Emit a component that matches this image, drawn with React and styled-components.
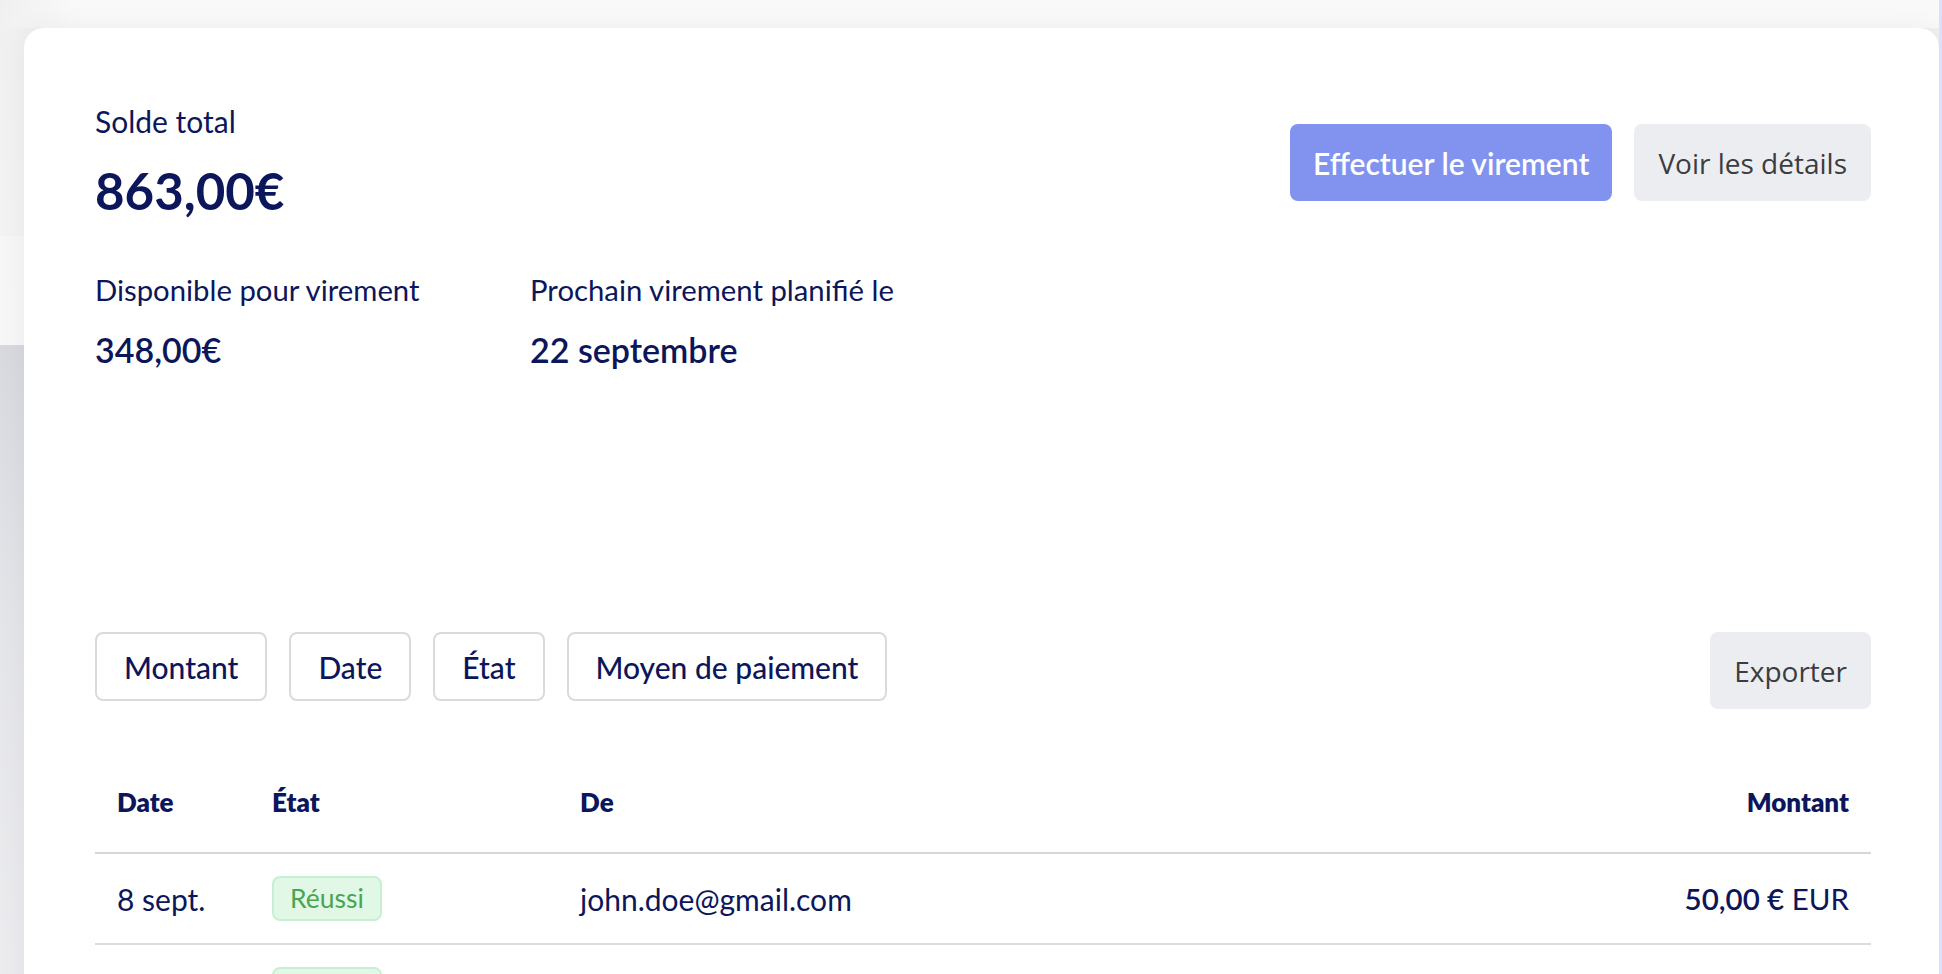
import React from 'react';
import styled, { createGlobalStyle } from 'styled-components';

const navy = '#0c165a';

const GlobalStyle = createGlobalStyle`
  html, body {
    margin: 0;
    padding: 0;
    height: 100%;
    overflow: hidden;
  }
  body {
    font-family: Lato, "Noto Sans", sans-serif;
    background: #f7f7f8;
    color: ${navy};
  }
  #root {
    height: 100%;
  }
`;

const Page = styled.div`
  display: flex;
  height: 100vh;
`;

const Stage = styled.div`
  flex: 1;
  display: flex;
  flex-direction: column;
  padding: 28px 0 0 24px;
  background:
    linear-gradient(to right, rgba(249, 249, 249, 0) 0, #f9f9f9 80px) 0 0 / 100% 28px no-repeat,
    linear-gradient(
      to bottom,
      #f0f0f1 0,
      #f3f3f4 236px,
      #f6f6f7 236px,
      #f7f7f8 345px,
      #d8d9df 345px,
      #e4e5e9 620px,
      #ececef 974px
    );
`;

const Strip = styled.div`
  width: 3px;
  flex-shrink: 0;
  background: #dae2fb;
`;

const Card = styled.div`
  flex: 1;
  background: #ffffff;
  border-radius: 20px 20px 0 0;
  padding: 75px 68px 0 71px;
  box-shadow: 0 0 28px rgba(30, 30, 50, 0.05);
`;

const Top = styled.div`
  display: flex;
  justify-content: space-between;
  align-items: flex-start;
`;

const Summary = styled.div`
  display: flex;
  flex-direction: column;
`;

const Label = styled.div`
  font-size: ${(p) => p.$size || 30}px;
  line-height: 36px;
  font-weight: 400;
  white-space: nowrap;
`;

const Balance = styled.div`
  margin-top: 22px;
  font-size: 51px;
  line-height: 60px;
  font-weight: 700;
`;

const Stats = styled.div`
  display: grid;
  grid-template-columns: 435px auto;
  margin-top: 51px;
`;

const Stat = styled.div`
  display: flex;
  flex-direction: column;
  gap: 22px;
`;

const StatValue = styled.div`
  font-size: 34px;
  line-height: 40px;
  font-weight: 600;
`;

const Actions = styled.div`
  display: flex;
  gap: 22px;
  margin-top: 21px;
`;

const Button = styled.button`
  height: 77px;
  border: none;
  border-radius: 8px;
  padding: 0 ${(p) => (p.$primary ? 23 : 24)}px;
  background: ${(p) => (p.$primary ? '#8193ee' : '#ecedf0')};
  color: ${(p) => (p.$primary ? '#ffffff' : '#3b3c41')};
  font-family: ${(p) => (p.$primary ? 'Lato' : '"Open Sans"')}, sans-serif;
  font-size: ${(p) => (p.$primary ? 30 : 28)}px;
  line-height: 36px;
  font-weight: ${(p) => (p.$primary ? 600 : 400)};
  cursor: pointer;
  white-space: nowrap;
`;

const Toolbar = styled.div`
  display: flex;
  justify-content: space-between;
  align-items: flex-start;
  margin-top: 262px;
`;

const Filters = styled.div`
  display: flex;
  gap: 22px;
`;

const Filter = styled.button`
  height: 69px;
  padding: 0 27px;
  background: #ffffff;
  border: 2px solid #dadadd;
  border-radius: 8px;
  color: ${navy};
  font-family: Lato, sans-serif;
  font-size: 30px;
  line-height: 36px;
  font-weight: 500;
  cursor: pointer;
  white-space: nowrap;
`;

const Table = styled.table`
  width: 100%;
  margin-top: 43px;
  border-collapse: collapse;
`;

const Th = styled.th`
  height: 100px;
  padding: 0 22px;
  text-align: ${(p) => p.$align || 'left'};
  vertical-align: middle;
  font-size: 26px;
  line-height: 32px;
  font-weight: 800;
  width: ${(p) => p.$width || 'auto'};
  border-bottom: 2px solid #d6d6d9;
`;

const Td = styled.td`
  height: 89px;
  padding: 0 22px;
  text-align: ${(p) => p.$align || 'left'};
  vertical-align: middle;
  font-size: ${(p) => p.$size || 30}px;
  line-height: 36px;
  font-weight: 400;
  border-bottom: 2px solid #dcdcdf;
  white-space: nowrap;
`;

const Badge = styled.span`
  display: inline-block;
  padding: 0 16px;
  line-height: 41px;
  font-size: 26.5px;
  color: #4aa552;
  background: #e1f8e7;
  border: 2px solid #c6f0d1;
  border-radius: 8px;
  vertical-align: middle;
`;

const Amount = styled.span`
  font-weight: 600;
`;

const rows = [
  { date: '8 sept.', state: 'Réussi', from: 'john.doe@gmail.com', amount: '50,00 €' },
  { date: '2 sept.', state: 'Réussi', from: 'john.doe@gmail.com', amount: '120,00 €' },
];

const filters = ['Montant', 'Date', 'État', 'Moyen de paiement'];

export default function App() {
  return (
    <>
      <GlobalStyle />
      <Page>
        <Stage>
          <Card>
            <Top>
              <Summary>
                <Label>Solde total</Label>
                <Balance>863,00€</Balance>
                <Stats>
                  <Stat>
                    <Label $size={29.3}>Disponible pour virement</Label>
                    <StatValue>348,00€</StatValue>
                  </Stat>
                  <Stat>
                    <Label $size={29.3}>Prochain virement planifié le</Label>
                    <StatValue>22 septembre</StatValue>
                  </Stat>
                </Stats>
              </Summary>
              <Actions>
                <Button $primary>Effectuer le virement</Button>
                <Button>Voir les détails</Button>
              </Actions>
            </Top>

            <Toolbar>
              <Filters>
                {filters.map((f) => (
                  <Filter key={f}>{f}</Filter>
                ))}
              </Filters>
              <Button>Exporter</Button>
            </Toolbar>

            <Table>
              <thead>
                <tr>
                  <Th $width="111px">Date</Th>
                  <Th $width="264px">État</Th>
                  <Th>De</Th>
                  <Th $align="right">Montant</Th>
                </tr>
              </thead>
              <tbody>
                {rows.map((r, i) => (
                  <tr key={i}>
                    <Td>{r.date}</Td>
                    <Td>
                      <Badge>{r.state}</Badge>
                    </Td>
                    <Td>{r.from}</Td>
                    <Td $align="right" $size={29.5}>
                      <Amount>{r.amount}</Amount> EUR
                    </Td>
                  </tr>
                ))}
              </tbody>
            </Table>
          </Card>
        </Stage>
        <Strip />
      </Page>
    </>
  );
}
